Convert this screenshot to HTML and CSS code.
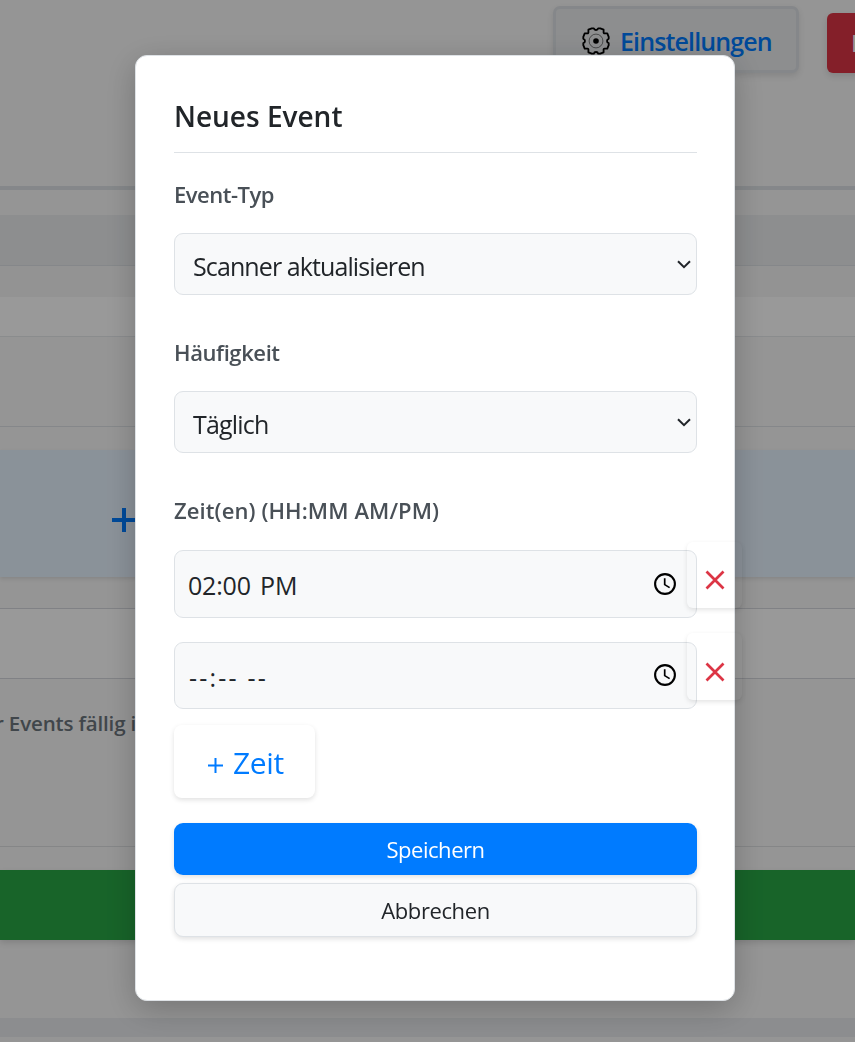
FILE: index.html
```
<!DOCTYPE html>
<html lang="de">
<head>
<meta charset="utf-8">
<title>Neues Event</title>
<link rel="stylesheet" href="styles.css">
</head>
<body>
<div class="page">
  <header class="topbar">
    <div class="settings">
      <svg class="gear" width="28" height="28" viewBox="0 0 28 28" fill="none" stroke="#000">
        <path stroke-width="1.800" stroke-linejoin="round" d="M9.800 1.300H11.800Q12.200 3 14 3T16.200 1.300H18.200L21.600 2.700V4.800Q21.200 6.800 23.200 6.400H25.300L26.700 9.800V11.800Q25 12.200 25 14T26.700 16.200V18.200L25.300 21.600H23.200Q21.200 21.200 21.600 23.200V25.300L18.200 26.700H16.200Q15.800 25 14 25T11.800 26.700H9.800L6.400 25.300V23.200Q6.800 21.200 4.800 21.600H2.700L1.300 18.200V16.200Q3 15.800 3 14T1.300 11.800V9.800L2.700 6.400H4.800Q6.800 6.800 6.400 4.800V2.700Z"/>
        <circle cx="14" cy="14" r="6.900" stroke-width="0.800" opacity="0.600"/>
        <circle cx="14" cy="14" r="2.800" fill="#000" stroke="none"/>
      </svg>
      <span class="settings-label">Einstellungen</span>
    </div>
    <div class="logout"><span>L</span></div>
  </header>
  <div class="strip tabs-gap"></div>
  <div class="strip tabs"></div>
  <div class="strip band"></div>
  <div class="strip row-white"></div>
  <div class="strip row-tall"></div>
  <div class="strip gap-a"></div>
  <div class="add-bar"><svg width="24" height="24" viewBox="0 0 24 24"><path d="M12 0V24M0 12H24" stroke="#007bff" stroke-width="4"/></svg></div>
  <div class="strip gap-b"></div>
  <div class="strip field-row"></div>
  <div class="due"><span class="due-text">r Events fällig i</span></div>
  <div class="strip gap-c"></div>
  <div class="strip confirm"></div>
  <div class="strip gap-d"></div>
  <div class="strip footer-bar"></div>
</div>
<div class="overlay">
  <main class="modal">
    <h2 class="title"><span>Neues Event</span></h2>
    <div class="label label-first"><span class="t-typ">Event-Typ</span></div>
    <div class="select">
      <span class="t-scan">Scanner aktualisieren</span>
      <svg class="chevron" width="14" height="9" viewBox="0 0 14 9"><path d="M1 1.200L7 7.200L13 1.200" fill="none" stroke="#212529" stroke-width="2"/></svg>
    </div>
    <div class="label"><span class="t-freq">Häufigkeit</span></div>
    <div class="select">
      <span class="t-daily">Täglich</span>
      <svg class="chevron" width="14" height="9" viewBox="0 0 14 9"><path d="M1 1.200L7 7.200L13 1.200" fill="none" stroke="#212529" stroke-width="2"/></svg>
    </div>
    <div class="label"><span class="t-times">Zeit(en) (HH:MM AM/PM)</span></div>
    <div class="time time-one">
      <span class="t-clock">02:00 PM</span>
      <svg class="clock" width="22" height="22" viewBox="0 0 22 22" fill="none" stroke="#000"><circle cx="11" cy="11" r="9.900" stroke-width="2.100"/><path d="M10.700 5.200V11.600L15.600 14.600" stroke-width="1.700"/></svg>
      <div class="remove"><svg width="20" height="20" viewBox="0 0 20 20"><path d="M1.500 1.500L18.500 18.500M18.500 1.500L1.500 18.500" stroke="#dc3545" stroke-width="2.700"/></svg></div>
    </div>
    <div class="time time-two">
      <span class="t-empty">--:-- --</span>
      <svg class="clock" width="22" height="22" viewBox="0 0 22 22" fill="none" stroke="#000"><circle cx="11" cy="11" r="9.900" stroke-width="2.100"/><path d="M10.700 5.200V11.600L15.600 14.600" stroke-width="1.700"/></svg>
      <div class="remove"><svg width="20" height="20" viewBox="0 0 20 20"><path d="M1.500 1.500L18.500 18.500M18.500 1.500L1.500 18.500" stroke="#dc3545" stroke-width="2.700"/></svg></div>
    </div>
    <div class="add-time"><svg class="plus" width="15" height="15" viewBox="0 0 15 15"><path d="M7.500 0V15M0 7.500H15" stroke="#007bff" stroke-width="2"/></svg><span class="t-zeit">Zeit</span></div>
    <div class="save"><span>Speichern</span></div>
    <div class="cancel"><span>Abbrechen</span></div>
  </main>
</div>
</body>
</html>
```
FILE: styles.css
```
* { box-sizing: border-box; }
body {
  margin: 0;
  height: 1042px;
  overflow: hidden;
  background: #f8f8f8;
  color: #212529;
  font-family: "Open Sans", "Noto Sans", sans-serif;
  white-space: nowrap;
}
svg { display: block; flex: none; }

/* Page behind the dialog */
.page { display: flex; flex-direction: column; height: 1042px; overflow: hidden; }
.page > * { flex: none; }
.topbar {
  display: flex;
  align-items: flex-start;
  height: 190px;
  padding: 6px 0 0 553px;
  border-bottom: 4px solid #dee2e6;
}
.settings {
  flex: none;
  display: flex;
  align-items: center;
  width: 246px;
  height: 67px;
  padding: 3px 0 0 26px;
  border: 3px solid #dee2e6;
  border-radius: 7px;
  background: #ebedef;
  box-shadow: 0 3px 6px rgba(0,0,0,.1);
  color: #007bff;
  font-size: 25px;
  font-weight: 600;
}
.settings-label { margin: 0 0 0 10px; letter-spacing: -.87px; }
.logout {
  flex: none;
  display: flex;
  align-items: center;
  width: 60px;
  height: 60px;
  margin: 7px 0 0 28px;
  padding-left: 24px;
  border-radius: 6px;
  background: #dc3545;
  color: #fff;
  font-size: 23px;
  box-shadow: 0 3px 6px rgba(0,0,0,.12);
}
.tabs-gap { height: 25px; }
.tabs { height: 51px; background: #ebedef; border-bottom: 1px solid #dee2e6; }
.band { height: 31px; background: #f6f6f6; }
.row-white { height: 40px; background: #fff; border-bottom: 1px solid #e6e9ec; }
.row-tall { height: 90px; border-bottom: 1px solid #dee2e6; }
.gap-a { height: 23px; }
.add-bar {
  display: flex;
  height: 127px;
  padding: 58px 0 0 112px;
  background: #e7f3ff;
  box-shadow: 0 2px 4px rgba(0,0,0,.1);
}
.gap-b { height: 32px; border-bottom: 1px solid #d6d8de; }
.field-row { height: 70px; background: #fff; border-bottom: 1px solid #d6d8de; }
.due { height: 168px; padding-top: 29px; border-bottom: 1px solid #dee0e2; color: #6c757d; }
.due-text {
  display: block;
  margin-left: -5px;
  font-size: 20.500px;
  line-height: 30px;
  font-weight: 600;
  letter-spacing: -.15px;
}
.gap-c { height: 23px; }
.confirm { height: 70px; background: #28a745; box-shadow: 0 3px 6px rgba(0,0,0,.12); }
.gap-d { height: 78px; }
.footer-bar { height: 19px; background: #e9ebee; }

/* Dialog */
.overlay {
  position: fixed;
  inset: 0;
  padding: 55px 0 0 135px;
  background: rgba(0,0,0,.4);
}
.modal {
  display: flex;
  flex-direction: column;
  width: 600px;
  height: 946px;
  padding: 37px 37px 0 38px;
  border: 1px solid #dee2e6;
  border-radius: 12px;
  background: #fff;
  box-shadow: 0 8px 32px rgba(0,0,0,.22);
}
.modal > * { flex: none; }
.title {
  height: 60px;
  margin: 0;
  border-bottom: 1px solid #dee2e6;
  font-size: 28px;
  line-height: 46px;
  font-weight: 600;
}
.label {
  height: 30px;
  margin: 43px 0 23px;
  color: #495057;
  font-size: 22px;
  line-height: 28px;
  font-weight: 600;
}
.label-first { margin-top: 27px; }
.t-typ { letter-spacing: -.5px; }
.t-freq { letter-spacing: -.4px; }
.t-times { letter-spacing: .1px; }
.t-scan { letter-spacing: -.9px; }
.t-daily { letter-spacing: -.8px; }
.t-clock { margin: -2px 0 0 -1px; letter-spacing: -.2px; word-spacing: 3px; }
.t-empty { margin-top: -1px; letter-spacing: 2.200px; }
.select {
  display: flex;
  align-items: center;
  justify-content: space-between;
  height: 62px;
  padding: 3px 5px 0 18px;
  border: 1px solid #dee2e6;
  border-radius: 9px;
  background: #f8f9fa;
  font-size: 25px;
}
.chevron { margin-top: -2px; }
.time {
  position: relative;
  display: flex;
  align-items: center;
  justify-content: space-between;
  height: 68px;
  padding: 3px 20px 0 14px;
  border: 1px solid #dee2e6;
  border-radius: 9px;
  background: #f8f9fa;
  font-size: 25px;
}
.time-one { margin-top: 1px; }
.time-two { height: 67px; margin-top: 24px; }
.clock { margin-top: -3px; }
.time-two .clock { margin-top: -4px; }
/* The remove button hangs over the field's right edge */
.remove {
  position: absolute;
  right: -46px;
  top: -9px;
  display: flex;
  align-items: center;
  justify-content: center;
  width: 55px;
  height: 66px;
  padding: 10px 0 0;
  border-radius: 6px;
  box-shadow: 0 2px 5px rgba(0,0,0,.11);
}
.time-two .remove { top: -10px; height: 67px; padding-top: 11px; }
.add-time {
  display: flex;
  align-items: center;
  width: 141px;
  height: 73px;
  margin-top: 16px;
  padding: 4px 0 0 34px;
  border-radius: 8px;
  box-shadow: 0 2px 5px rgba(0,0,0,.12);
  color: #007bff;
  font-size: 30px;
}
.plus { margin-top: 4px; }
.t-zeit { margin: -2px 0 0 10px; letter-spacing: -.4px; }
.save, .cancel {
  display: flex;
  align-items: center;
  justify-content: center;
  border-radius: 9px;
  box-shadow: 0 2px 5px rgba(0,0,0,.12);
  font-size: 22px;
}
.save { height: 52px; margin-top: 25px; background: #007bff; color: #fff; letter-spacing: -.45px; }
.cancel { height: 54px; margin-top: 8px; background: #f8f9fa; border: 1px solid #dee2e6; letter-spacing: -.4px; }
```
